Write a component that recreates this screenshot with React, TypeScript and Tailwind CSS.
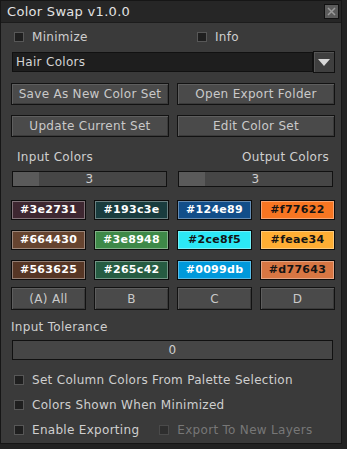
import React from 'react';

const swatches = [
  { hex: '#3e2731', dark: true },
  { hex: '#193c3e', dark: true },
  { hex: '#124e89', dark: true },
  { hex: '#f77622', dark: false },
  { hex: '#664430', dark: true },
  { hex: '#3e8948', dark: true },
  { hex: '#2ce8f5', dark: false },
  { hex: '#feae34', dark: false },
  { hex: '#563625', dark: true },
  { hex: '#265c42', dark: true },
  { hex: '#0099db', dark: true },
  { hex: '#d77643', dark: false },
];

const Check = ({ label, dim }: { label: string; dim?: boolean }) => (
  <div className="flex items-center gap-[8px] h-[17px]">
    <span className={`w-[10px] h-[10px] border ${dim ? 'border-[#4a4a4a] bg-[#2e2e2e]' : 'border-[#575757] bg-[#1f1f1f]'}`} />
    <span className={dim ? 'text-[#777]' : 'text-[#cfcfcf]'}>{label}</span>
  </div>
);

const Btn = ({ label, h = 'h-[22px]' }: { label: string; h?: string }) => (
  <div className={`${h} flex items-center justify-center border border-[#121212] bg-[#4a4a4a] shadow-[inset_1px_1px_0_#5e5e5e,inset_-1px_-1px_0_#3a3a3a] text-[#c9c9c9]`}>
    {label}
  </div>
);

const Slider = ({ value, h = 'h-[16px]' }: { value: string; h?: string }) => (
  <div className={`${h} relative flex items-center justify-center border border-[#111] bg-[#464646] text-[#cfcfcf]`}>
    {h === 'h-[16px]' && <span className="absolute left-0 top-0 bottom-0 w-[26px] bg-[#5a5a5a]" />}
    <span className="relative leading-none">{value}</span>
  </div>
);

export default function App() {
  return (
    <div className="w-[347px] h-[449px] bg-[#222222] font-['DejaVu_Sans',sans-serif] text-[12px] tracking-[0.3px]">
      <div className="w-[342px] h-[444px] border border-[#161616] bg-[#3a3a3a] flex flex-col">
        <div className="h-[22px] bg-[#262626] border-b border-[#1c1c1c] flex items-center justify-between pl-[6px] pr-[2px]">
          <span className="text-[#e2e2e2] text-[13px]">Color Swap v1.0.0</span>
          <span className="w-[15px] h-[15px] border border-[#111] bg-[#5b5b5b] flex items-center justify-center">
            <svg width="9" height="9" viewBox="0 0 9 9">
              <path d="M1 1L8 8M8 1L1 8" stroke="#9a9a9a" strokeWidth="1.5" />
            </svg>
          </span>
        </div>

        <div className="flex flex-col pl-[10px] pr-[6px]">
          <div className="h-[16px] mt-[5px] grid grid-cols-[183px_1fr] pl-[3px]">
            <Check label="Minimize" />
            <Check label="Info" />
          </div>

          <div className="mt-[7px] flex h-[22px]">
            <div className="flex-1 h-[20px] pl-[1px] mt-[1px]">
              <div className="h-[20px] border border-[#111] bg-[#1e1e1e] flex items-center pl-[3px] text-[#d4d4d4]">Hair Colors</div>
            </div>
            <div className="w-[22px] h-[22px] border border-[#111] bg-[#3f3f3f] shadow-[inset_1px_1px_0_#555] flex items-center justify-center">
              <svg width="12" height="7" viewBox="0 0 12 7">
                <path d="M0 0H12L6 7Z" fill="#d8d8d8" />
              </svg>
            </div>
          </div>

          <div className="mt-[10px] grid grid-cols-2 gap-[8px]">
            <Btn label="Save As New Color Set" />
            <Btn label="Open Export Folder" />
          </div>
          <div className="mt-[10px] grid grid-cols-2 gap-[8px]">
            <Btn label="Update Current Set" />
            <Btn label="Edit Color Set" />
          </div>

          <div className="mt-[11px] flex justify-between px-[6px] text-[#cfcfcf]">
            <span>Input Colors</span>
            <span>Output Colors</span>
          </div>

          <div className="mt-[5px] grid grid-cols-2 gap-[11px] pl-[1px] pr-[2px]">
            <Slider value="3" />
            <Slider value="3" />
          </div>

          <div className="mt-[13px] grid grid-cols-4 gap-x-[8px] gap-y-[10px]">
            {swatches.map((s) => (
              <div
                key={s.hex}
                className={`h-[20px] border border-[#0c0c0c] flex items-center justify-center font-bold text-[11px] shadow-[inset_0_0_0_1px_rgba(255,255,255,0.35)] ${s.dark ? 'text-white' : 'text-[#141414]'}`}
                style={{ backgroundColor: s.hex }}
              >
                {s.hex}
              </div>
            ))}
          </div>

          <div className="mt-[7px] grid grid-cols-4 gap-[8px]">
            <Btn label="(A) All" h="h-[23px]" />
            <Btn label="B" h="h-[23px]" />
            <Btn label="C" h="h-[23px]" />
            <Btn label="D" h="h-[23px]" />
          </div>

          <div className="mt-[8px] text-[#cfcfcf]">Input Tolerance</div>

          <div className="mt-[4px] pl-[1px] pr-[2px]">
            <Slider value="0" h="h-[20px]" />
          </div>

          <div className="mt-[11px] flex flex-col gap-[8px] pl-[3px]">
            <Check label="Set Column Colors From Palette Selection" />
            <Check label="Colors Shown When Minimized" />
            <div className="flex gap-[20px]">
              <Check label="Enable Exporting" />
              <Check label="Export To New Layers" dim />
            </div>
          </div>
        </div>
      </div>
    </div>
  );
}
